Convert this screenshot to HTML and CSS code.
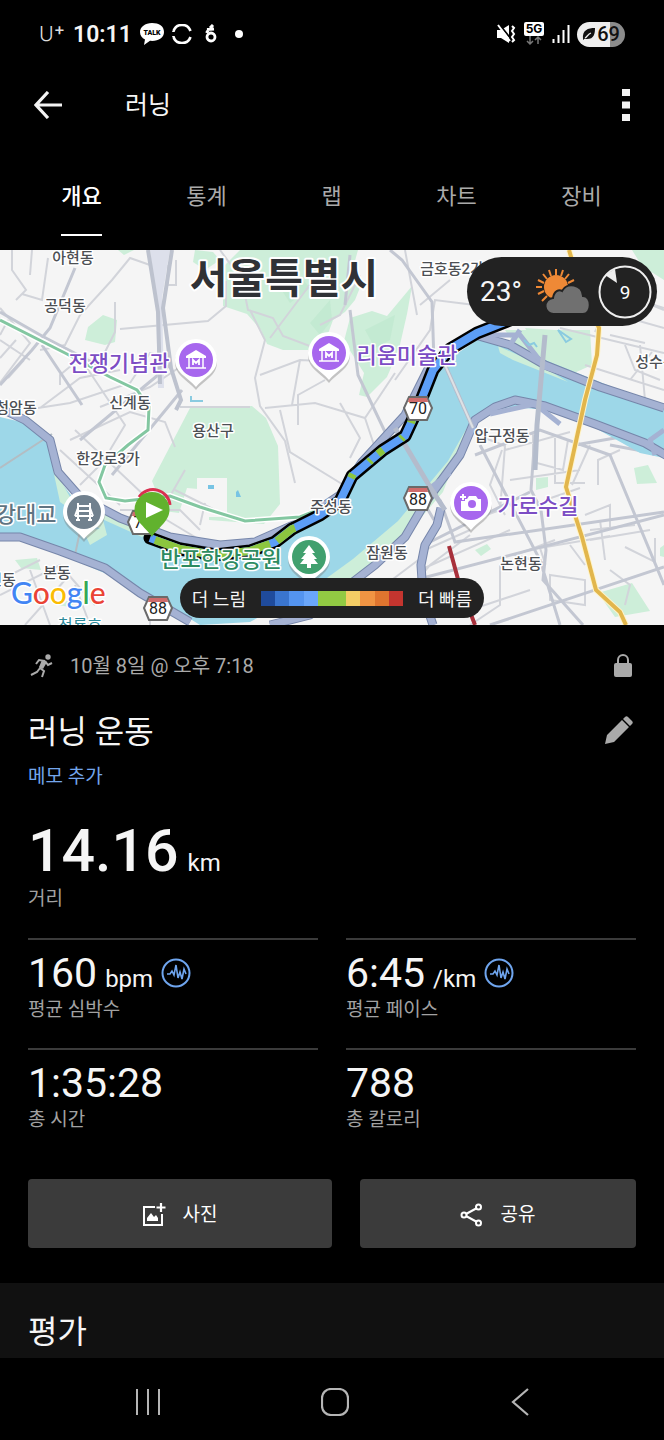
FILE: index.html
```html
<!DOCTYPE html>
<html lang="ko">
<head>
<meta charset="utf-8">
<meta name="viewport" content="width=device-width, initial-scale=1">
<title>러닝</title>
<link rel="stylesheet" href="styles.css">
</head>
<body>
<div class="screen">
  <div class="status">
    <div class="status-group">
      <span class="carrier">U<sup>+</sup></span>
      <span class="clock">10:11</span>
      <svg class="talk" viewBox="0 0 24 22"><path d="M12 0C5 0 0 4 0 9c0 3.500 2 6 5 7.600L4 22l6-4.200C18 18.500 24 15 24 9S19 0 12 0Z" fill="#fff"/><text x="12" y="12" text-anchor="middle" class="talk-text">TALK</text></svg>
      <svg class="ico20" viewBox="0 0 20 20"><path d="M1.500 7A9 9 0 0 1 18.500 7M1.500 13A9 9 0 0 0 18.500 13M1.500 7v1M1.500 12v1" fill="none" stroke="#fff" stroke-width="2.600"/></svg>
      <svg class="ring" viewBox="0 0 12 20"><circle cx="6" cy="13" r="4" fill="none" stroke="#fff" stroke-width="2.800"/><path d="M1.500 9 4 5M2 5.500 9 5M5 4 8 1" stroke="#fff" stroke-width="3"/></svg>
      <span class="dot"></span>
    </div>
    <div class="status-group right">
      <svg class="mute" viewBox="0 0 20 20"><path d="M1 6h4l8-5v18l-8-5H1Z" fill="#fff"/><path d="M3 0 15 15" stroke="#000" stroke-width="2"/><path d="m2 1 12 16M16 2l2 2-2 3 2 3-2 3 2 3-2 2" fill="none" stroke="#fff" stroke-width="2"/></svg>
      <svg class="fiveg" viewBox="0 0 22 24"><rect x="1" width="20" height="14" rx="2" fill="#fff"/><text x="11" y="11" text-anchor="middle" class="fiveg-text">5G</text><path d="M7 14v8M4 19l3 3 3-3M15 22v-7M12 18l3-3 3 3" fill="none" stroke="#777" stroke-width="1.500"/></svg>
      <svg class="signal" viewBox="0 0 18 18"><path d="M1.500 14v4M6.500 10v8M11.500 5v13M16.500 0v18" stroke="#fff" stroke-width="2"/></svg>
      <span class="battery"><svg class="leaf" viewBox="0 0 14 14"><path d="M1 12C0 3 6 1 13 1c0 6-1 11-8 11-2 0-2-1-4 1Z" fill="#111"/><path d="M3 11C5 10 6 7 9 6" stroke="#eee" stroke-width="1.300" fill="none"/></svg>69</span>
    </div>
  </div>

  <header class="appbar">
    <button class="icon-btn" aria-label="뒤로"><svg class="back" viewBox="0 0 28 28"><path d="M14 1 2 14l12 13M2 14h26" fill="none" stroke="#f3f3f3" stroke-width="3.200"/></svg></button>
    <h1>러닝</h1>
    <button class="icon-btn" aria-label="더보기"><svg class="more" viewBox="0 0 8 32"><path d="M0 0h8v7H0ZM0 12.500h8v7H0ZM0 25h8v7H0Z" fill="#f3f3f3"/></svg></button>
  </header>

  <nav class="tabs">
    <a href="#overview" class="active" aria-current="page">개요</a>
    <a href="#stats">통계</a>
    <a href="#laps">랩</a>
    <a href="#charts">차트</a>
    <a href="#gear">장비</a>
  </nav>

  <section class="map">
    <svg class="map-art" viewBox="0 0 664 375" role="img" aria-label="서울 러닝 경로 지도">
      <defs>
        <g id="pin"><path d="M0-21A21 21 0 0 1 21 0C21 14 8 18 0 28-8 18-21 14-21 0A21 21 0 0 1 0-21Z" fill="#777" opacity=".4" transform="translate(0 2)"/><path d="M0-21A21 21 0 0 1 21 0C21 13 8 17 0 27-8 17-21 13-21 0A21 21 0 0 1 0-21Z" fill="#fff"/><circle r="17"/></g>
        <g id="museum"><path d="M-10-4 0-10 10-4v2h-20Z" fill="#fff"/><path d="M-10 8H10M-7-3V8M7-3V8" stroke="#fff" stroke-width="1.500"/><path d="M-3 5V0L0 3 3 0V5" fill="none" stroke="#fff" stroke-width="1.800"/></g>
        <g id="shield"><path d="M-9-11H9L14 0 9 12H-9L-14 0Z" fill="#fff" stroke="#6a6a6a" stroke-width="2"/><path d="M-9-10H9L10-6H-10Z" fill="#cf6c6c"/></g>
      </defs>
      <rect width="664" height="375" fill="#f5f5f5"/>
      <g fill="#cdeed9">
        <path d="M240 0h118l-5 18 10 12-8 20-10 12-12 8-8 22-12 8-30 0-16-6-6-14-14-16-24-8V40l-8-15Z"/>
        <path d="m350 68 22-7 15 5 25-30-5 28-8 35-12 28-20 20-8-2 5-22-20-32Z"/>
        <path d="m190 158 62-2 14 12 12 28 2 58-16 20-55-4v-30l-22-2-8 25-15-2-12-30Z"/>
        <path d="m88 77 15-12 14 5-2 22-10 3-20-5ZM195 0l18 2 7 8-15 10-12-8ZM505 80l85 0 2 35-20 9-50-18ZM118 0h16l-10 5ZM632 0h32v30l-22-14ZM536 228l12-1v10l-12 3ZM634 218l14-3 9 18-20 1ZM660 298v8l4 1v-12ZM598 343l34-10 18 28-35 6ZM475 300l12-6 4 5-10 7ZM15 310l22-2 4 12-20-2ZM60 350l15 2-5 5-12-2Z"/>
      </g>
      <g fill="#bfe8cf" opacity=".7"><path d="m275 30 20-10 15 18-20 15ZM365 80l30-15-5 25-15 8ZM330 50l2 20-12 15-10-12Z"/></g>
      <path d="M197 228h30v39h-30Z" fill="#f5f5f5"/>

      <g fill="none" stroke="#d2d4da" stroke-width="2">
        <path d="M12 0v20l14 20-10 10M32 0l-2 25M48 8 42 50 22 44M0 58l30 35-30 40M0 90l30 20M8 70 0 85M16 90 0 108M24 110 8 128M40 100 65 95 80 65 112 30 130 8 150 15M115 52v30l-10 20M120 79l88-8 18-15v-25M38 158l32-5 60-20 20-30 18 4M85 115l40 60-15 25M40 158l40-30 40-8M100 157l50-20 30-20M70 190l60-28 35 10 10 25M168 15v20h8V10M60 135v-10l12-10"/>
        <path d="M220 0l22 30 6 30 25 8 10 18 32 12M250 60l15 30-10 38 5 28 25 35 10 42M260 125l40-15 40 2M265 158l50-5 50 15 30-45M280 160l10 42 65 40M325 130 298 145v30M300 110l-8 45M250 157H180M270 88l45-60M365 168l15 45M395 130l35-50 5-30 80 10M405 0l12 65M420 55l30-25M360 25 340 65l-20 10M455 90l35 5M340 153l20 35-10 20"/>
        <path d="M560 78l104 25M585 115 664 140M595 82l30-62M625 95l10 25 25 10M600 60l64 18M610 85l35 8M640 95l5 55M520 15l30 60M575 30l89 28M630 130l22-28M615 40l49 20"/>
        <path d="M475 184l30 12-5 65M502 200l-12 35 15 30M533 184v28l30 8 5-30M555 188v45h30M505 200l65-18M510 230l70-10M545 250l35-12M500 260l-22 8M555 290l-40 15 30 8-5-15 70-12M585 265l25-10v25M570 295l15 20M600 270l5 40M590 280l45-5M590 290l60-10M620 200l-22 10v25M655 288v24l-30-15M500 315v40l-30 20M530 340l-60 20M550 325l35 5v25l-35-5ZM610 320l20 15-5 20M470 280l-45 20M590 195l-18 40"/>
        <path d="M420 320l90-40M400 350l30-35 40-30M365 350l60-45M385 330l45 20M435 210l-30 30M440 220l-55 85M150 260l50 30M175 240l50 25M185 220l-20 35M200 275l5-22M0 330l40-20M0 345l60-30 35 40M25 375l40-45M90 375l-15-40M30 320l20 55M150 350v25M60 200l60 55M75 180l90 85M80 235l30-30M120 260l60 0 20 20"/>
      </g>
      <g fill="none" stroke="#c3c7d2" stroke-width="3">
        <path d="M75 18 50 78 32 100 0 135M0 62l42 24 65 34M182 140l-70 85M80 190l90-75M42 95l40 60"/>
        <path d="M390 0l12 10 30 42 2 60M350 60l8 65 38 80 38 65M345 55l5-50"/>
        <path d="M535 185l-4 55 10 20 5 40-3 30 40 45M440 250l15 42 209-30M430 292l100-50M475 205l65-25 70 25 54 130M415 330l249-65M480 195l60 115 20 65M490 375l174-58M610 195l54 10M575 195l80-14"/>
      </g>
      <path d="m150 0h20l-8 48 2 90h-6l-2-86Z" fill="#dde0eb"/>
      <path d="m148 0 10 62 2 72M172 0l-9 58 8 60 10 32-5 10" fill="none" stroke="#bdc2ce" stroke-width="4"/>

      <path d="M0 167 30 174 50 192 55 225 75 250 110 272 150 287 200 300 250 298 290 282 330 258 350 232 385 205 410 170 430 130 455 105 480 88 510 95 550 112 600 132 664 158V208L640 203 590 175 550 160 510 157 485 165 468 180 455 210 430 240 400 272 375 300 345 325 300 345 250 372 200 375 160 350 120 330 70 308 30 292 0 286Z" fill="#9dd7e8"/>
      <path d="M52 215 70 247 103 270 107 285 90 295 83 280 100 279 60 252ZM105 258l45 22-8 7-40-18ZM468 176l-20 35-50 60-45 38-55 40 60-17 55-55 30-35ZM498 96l40 18 30 18-55-22-13-7ZM525 78l30 2 2 25-20-8Z" fill="#cdeed9"/>
      <path d="M0 218 52 184M75 305 84 262" stroke="#b3bdc3" stroke-width="2"/>
      <g fill="none" stroke-linejoin="round">
        <g stroke="#7686aa" stroke-width="9">
          <path d="M0 158 25 170 50 190 58 222 80 247 120 268 170 287 220 295 255 292 300 272 340 245 362 212 405 165 430 115 475 85 510 95 545 115 600 137 664 158"/>
          <path d="M0 287H20L60 301 105 318 140 343 190 372M270 375l40-10 65-50 30-28 20-34 35-48 15-35 20-13 20-7 30 6 50 18 50 19 24 14M441 258l-4 17-12 20-4 20 2 30 10 30"/>
        </g>
        <g stroke="#a5b2d3" stroke-width="7">
          <path d="M0 158 25 170 50 190 58 222 80 247 120 268 170 287 220 295 255 292 300 272 340 245 362 212 405 165 430 115 475 85 510 95 545 115 600 137 664 158"/>
          <path d="M0 287H20L60 301 105 318 140 343 190 372M270 375l40-10 65-50 30-28 20-34 35-48 15-35 20-13 20-7 30 6 50 18 50 19 24 14M441 258l-4 17-12 20-4 20 2 30 10 30"/>
        </g>
        <path d="m475 85 45 0 25 32 25 8M490 164l45-10 25 20M430 238l20-15M520 80l-10 15M655 205l-5-15 14-10" stroke="#a5b2d3" stroke-width="5"/>
        <path d="M395 178 430 237 445 260M545 85l-8 90-2 45" stroke="#b4bccc" stroke-width="5"/>
        <path d="M445 115 473 178" stroke="#b4bccc" stroke-width="4"/>
        <path d="M445 115 473 178" stroke="#dee1e4" stroke-width="2"/>
      </g>
      <path d="M524 90l5 5 5-2 3 4M558 80l8 12 5-3ZM191 146v5h12" fill="none" stroke="#8acbe0" stroke-width="2"/>
      <path d="M208 235h6v4h-6ZM236 247v-5l2-2 3 7Z" fill="#78c4e4"/>
      <g fill="none" stroke="#83c7a1" stroke-width="3">
        <path d="M0 70 65 103 110 127 137 140 149 157 148 180 128 195 105 215 99 232 106 248 125 251 170 246 200 257 245 271 300 267 330 255" stroke="#fff" stroke-width="6"/>
        <path d="M0 70 65 103 110 127 137 140 149 157 148 180 128 195 105 215 99 232 106 248 125 251 170 246 200 257 245 271 300 267 330 255"/>
      </g>
      <path d="M569 0 575 20 599 78 597 105 585 150 566 237 582 287 596 340 620 362 626 375" fill="none" stroke="#fff4ca" stroke-width="6"/>
      <path d="M569 0 575 20 599 78 597 105 585 150 566 237 582 287 596 340 620 362 626 375" fill="none" stroke="#e2b64c" stroke-width="4"/>
      <path d="m449 296 10 37 16 42" fill="none" stroke="#a7303b" stroke-width="4"/>

      <g fill="none" stroke-linejoin="round">
        <path d="M150 288 180 299 215 305 250 301 275 292 292 279 320 265 340 251 352 226 383 200 405 186 418 158 433 120 450 99 477 83 520 66" stroke="#000" stroke-width="13" stroke-linecap="round"/>
        <path d="M150 288 180 299 215 305 250 301 275 292 292 279 320 265 340 251 352 226 383 200 405 186 418 158 433 120 450 99 477 83 520 66" stroke="#5c9ef7" stroke-width="8"/>
        <path d="M155 290 180 299 215 305 250 301 270 294M277 291 292 279 295 278M351 228l2-4M369 212l2-2M378 204l5-4M401 189l2-2M411 173l1-3" stroke="#8cc63f" stroke-width="8"/>
      </g>

      <g class="district">
        <text x="73" y="13">아현동</text><text x="65" y="61">공덕동</text><text x="130" y="158">신계동</text><text x="213" y="186">용산구</text>
        <text x="108" y="214">한강로3가</text><text x="16" y="163">청암동</text><text x="331" y="262">주성동</text><text x="387" y="308">잠원동</text>
        <text x="502" y="191">압구정동</text><text x="521" y="319">논현동</text><text x="452" y="24">금호동2가</text><text x="656" y="117">성수동</text>
        <text x="57" y="328">본동</text><text x="2" y="335">진동</text>
      </g>
      <text class="city" x="284" y="43">서울특별시</text>
      <text class="poi" x="119" y="121">전쟁기념관</text>
      <text class="poi" x="407" y="113">리움미술관</text>
      <text class="poi" x="538" y="264">가로수길</text>
      <text class="poi bridge" x="16" y="272">한강대교</text>
      <text class="poi park" x="221" y="317">반포한강공원</text>
      <text class="station" x="80" y="381">청룡호</text>

      <use href="#pin" x="196" y="110" fill="#a767ee"/><use href="#museum" x="196" y="110"/>
      <use href="#pin" x="329" y="103" fill="#a767ee"/><use href="#museum" x="329" y="103"/>
      <use href="#pin" x="471" y="253" fill="#a767ee"/>
      <path d="M461 249h6l2-3h7l2 3h3v12h-20Z" fill="#fff"/><circle cx="472" cy="254" r="4" fill="#a767ee"/><path d="M463 243v8M459 247h8" stroke="#a767ee" stroke-width="4"/><path d="M463 244v6M460 247h6" stroke="#fff" stroke-width="2"/>
      <use href="#pin" x="84" y="262" fill="#71818e"/>
      <path d="M78 253v17M90 253v17M75 266h18M78 261h12M78 256h12M76 270h4M88 270h4M75 266l3-8M93 266l-3-8" stroke="#fff" stroke-width="2"/>
      <use href="#pin" x="309" y="307" fill="#41a06e"/>
      <path d="m309 295 6 8h-3l5 6h-3l4 5h-7v4h-4v-4h-7l4-5h-3l5-6h-3Z" fill="#fff"/>

      <use href="#shield" x="418" y="158"/><use href="#shield" x="418" y="248"/><use href="#shield" x="158" y="358"/><use href="#shield" x="142" y="272"/>
      <g class="route-no"><text x="418" y="164">70</text><text x="418" y="255">88</text><text x="158" y="364">88</text><text x="138" y="278">7</text></g>
      <path d="M139 247a17 17 0 0 1 31 8" fill="none" stroke="#d9304f" stroke-width="3"/>
      <path d="M152 242a17.500 17.500 0 0 1 17.500 17.500C169.500 272 157 278 152 287c-5-9-17.500-15-17.500-27.500A17.500 17.500 0 0 1 152 242Z" fill="#61b22e"/>
      <path d="m146 252 17 8-17 8Z" fill="#fff"/>
      <text class="google" x="11" y="354"><tspan fill="#4285f4">G</tspan><tspan fill="#ea4335">o</tspan><tspan fill="#fbbc05">o</tspan><tspan fill="#4285f4">g</tspan><tspan fill="#34a853">l</tspan><tspan fill="#ea4335">e</tspan></text>
    </svg>
    <div class="weather">
      <span>23°</span>
      <svg class="sky" viewBox="0 0 56 48"><g stroke="#ef8936" stroke-width="2"><path d="M20 1v6M13 2l2 6M27 2l-2 6M7 6l4 5M33 6l-4 5M2 12l6 3M38 12l-6 3M0 19h6M34 19h6M2 26l6-3M6 33l5-5"/></g><circle cx="20" cy="19" r="12" fill="#ef8936"/><path d="M18 46a8 8 0 0 1-1-16c1-7 6-9 9-7 5-9 20-7 21 5 9 0 9 18 0 18Z" fill="#707070" stroke="#222" stroke-width="2"/></svg>
      <svg class="wind" viewBox="0 0 54 54"><circle cx="27" cy="27" r="25.500" fill="none" stroke="#eee" stroke-width="2"/><path d="m7 10 10-6 2 14Z" fill="#eee"/><text x="27" y="34" text-anchor="middle" class="wind-text">9</text></svg>
    </div>
    <div class="legend"><span>더 느림</span><span class="scale"><i class="c1"></i><i class="c2"></i><i class="c3"></i><i class="c4"></i><i class="c5"></i><i class="c5"></i><i class="c6"></i><i class="c7"></i><i class="c8"></i><i class="c9"></i></span><span>더 빠름</span></div>
  </section>

  <main class="content">
    <div class="meta">
      <svg class="runner" viewBox="0 0 24 24"><circle cx="18" cy="3" r="2.700" fill="#aaa"/><path d="m15 7-5 7 4 3-2 6M10 14l-3 4-6 3M15 7l-6-1-3 4M15 7l3 4 4-2" fill="none" stroke="#aaa" stroke-width="2"/><path d="m12 6 5 2-4 7-4-2Z" fill="#aaa"/></svg>
      <span>10월 8일 @ 오후 7:18</span>
      <svg class="lock" viewBox="0 0 18 24"><path d="M4 10V6a5 5 0 0 1 10 0v4" fill="none" stroke="#aaa" stroke-width="2"/><rect y="9" width="18" height="14" rx="2" fill="#aaa"/></svg>
    </div>
    <div class="title-row">
      <h2>러닝 운동</h2>
      <button class="icon-btn" aria-label="편집"><svg class="pencil" viewBox="0 0 28 28"><path d="m0 28 2-9L17 4l7 7L9 26ZM18 3l2-2c1-1 2-1 3 0l4 4c1 1 1 2 0 3l-2 2Z" fill="#aaa"/></svg></button>
    </div>
    <a class="memo" href="#memo">메모 추가</a>
    <div class="distance"><p class="big">14.16 <small>km</small></p><p class="label">거리</p></div>
    <div class="stats">
      <div class="stat"><p class="value">160 <small>bpm</small> <svg class="pulse" viewBox="0 0 30 30"><circle cx="15" cy="15" r="13.500" fill="none" stroke="#6fa5ee" stroke-width="2"/><path d="M6 16h3l2-3 2 4 2-10 2 13 2-6 2 7 2-10 2 5" fill="none" stroke="#6fa5ee" stroke-width="1.600"/></svg></p><p class="label">평균 심박수</p></div>
      <div class="stat"><p class="value">6:45 <small>/km</small> <svg class="pulse" viewBox="0 0 30 30"><circle cx="15" cy="15" r="13.500" fill="none" stroke="#6fa5ee" stroke-width="2"/><path d="M6 16h3l2-3 2 4 2-10 2 13 2-6 2 7 2-10 2 5" fill="none" stroke="#6fa5ee" stroke-width="1.600"/></svg></p><p class="label">평균 페이스</p></div>
      <div class="stat"><p class="value">1:35:28</p><p class="label">총 시간</p></div>
      <div class="stat"><p class="value">788</p><p class="label">총 칼로리</p></div>
    </div>
    <div class="actions">
      <button class="action photo"><svg viewBox="0 0 24 24"><path d="M13 4H2v18h18V11" fill="none" stroke="#fff" stroke-width="2"/><path d="M19 0v9M14.500 4.500h9" stroke="#fff" stroke-width="2.200"/><path d="M5 18v-3l4-5 3 4 2-2 2 3v3Z" fill="#fff"/></svg>사진</button>
      <button class="action share"><svg viewBox="0 0 24 24"><path d="m6 11 11-6M6 13l11 6" stroke="#fff" stroke-width="2"/><g fill="none" stroke="#fff" stroke-width="2"><circle cx="4" cy="12" r="2.500"/><circle cx="18.500" cy="4" r="2.500"/><circle cx="18.500" cy="20" r="2.500"/></g></svg>공유</button>
    </div>
  </main>
  <section class="rating"><h2>평가</h2></section>
  <nav class="sysnav">
    <button class="icon-btn" aria-label="최근 앱"><svg viewBox="0 0 28 28"><path d="M3 1v26M14 1v26M25 1v26" stroke="#b5b5b5" stroke-width="2"/></svg></button>
    <button class="icon-btn" aria-label="홈"><svg viewBox="0 0 28 28"><rect x="1" y="1" width="26" height="26" rx="9" fill="none" stroke="#b5b5b5" stroke-width="2.200"/></svg></button>
    <button class="icon-btn" aria-label="뒤로 가기"><svg viewBox="0 0 28 28"><path d="M21 1 6 14l15 13" fill="none" stroke="#b5b5b5" stroke-width="2.200"/></svg></button>
  </nav>
</div>
</body>
</html>
```

FILE: styles.css
```css
* { box-sizing: border-box; }
body { margin: 0; background: #000; color: #f5f5f5; font-family: Roboto, "Noto Sans CJK KR", sans-serif; }
h1, h2, p { margin: 0; font-weight: 400; }
a { text-decoration: none; color: inherit; }
svg { display: block; flex: none; }
.screen { display: flex; flex-direction: column; min-height: 100vh; }
.icon-btn { border: 0; padding: 0; background: none; color: inherit; }

.status { display: flex; justify-content: space-between; align-items: center; height: 68px; padding: 0 39px; }
.status-group { display: flex; align-items: center; gap: 8px; }
.carrier { color: #ddd; font: 300 20px/24px Inter, sans-serif; }
.carrier sup { font-size: 17px; font-weight: 500; line-height: 1px; vertical-align: 6px; }
.clock { font-size: 23px; font-weight: 600; }
.talk { width: 24px; height: 22px; }
.talk-text { font: 900 7px Roboto, sans-serif; fill: #000; }
.ico20 { width: 20px; height: 20px; }
.ring { width: 12px; height: 20px; margin-left: 5px; }
.dot { width: 8px; height: 8px; margin-left: 10px; border-radius: 50%; background: #fff; }
.right { gap: 7px; }
.mute { width: 20px; height: 20px; }
.fiveg { width: 22px; height: 24px; }
.fiveg-text { font: 700 12px Inter, sans-serif; fill: #000; }
.signal { width: 18px; height: 18px; }
.battery { display: flex; align-items: center; justify-content: center; gap: 1px; width: 48px; height: 25px; border-radius: 13px; background: linear-gradient(90deg, #eee 68%, #8b8b8b 68%); color: #111; font-size: 20px; font-weight: 500; }
.leaf { width: 14px; height: 14px; }

.appbar { display: flex; align-items: center; height: 72px; padding: 2px 34px 0; }
.back { width: 28px; height: 28px; }
.appbar h1 { flex: 1; margin-left: 63px; padding-top: 2px; font-size: 25px; line-height: 36px; }
.more { width: 8px; height: 32px; }

.tabs { display: grid; grid-template-columns: repeat(5, 1fr); justify-items: center; height: 110px; padding: 32px 20px 0 19px; }
.tabs a { height: 64px; font-size: 22px; line-height: 50px; color: #aaa; }
.tabs .active { color: #fff; font-weight: 500; border-bottom: 2px solid #fff; }

.map { position: relative; overflow: hidden; }
.map-art { width: 100%; height: auto; font-family: Roboto, "Noto Sans CJK KR", sans-serif; text-anchor: middle; }
.map-art text { paint-order: stroke; stroke: #fff; stroke-width: 3px; stroke-linejoin: round; }
.district { font-size: 15px; font-weight: 500; fill: #4c4f54; }
.map-art .city { font-size: 41px; font-weight: 700; fill: #303236; stroke-width: 4px; }
.poi { font-size: 22px; font-weight: 500; fill: #7c4dc4; }
.map-art .bridge { fill: #5f7482; }
.map-art .park { fill: #2d8b61; }
.station { font-size: 16px; fill: #2d8a9a; }
.route-no { font-size: 16px; fill: #222; }
.map-art .route-no text { stroke: none; }
.map-art .google { font: 500 30px Lato, sans-serif; text-anchor: start; }
.weather { position: absolute; top: 7px; right: 7px; display: flex; align-items: center; gap: 14px; width: 190px; height: 69px; padding: 0 4px 0 13px; border-radius: 35px; background: #222; font-size: 28px; }
.sky { width: 56px; height: 48px; }
.wind { width: 54px; height: 54px; margin-left: -8px; }
.wind-text { font-size: 19px; fill: #fff; }
.legend { position: absolute; bottom: 7px; left: 50%; transform: translateX(-50%); display: flex; align-items: center; justify-content: center; gap: 15px; width: 304px; height: 40px; border-radius: 20px; background: #222; font-size: 18px; white-space: nowrap; }
.scale { display: flex; width: 142px; height: 15px; }
.scale i { flex: 1; }
.c1 { background: #1f4b9c; } .c2 { background: #3a75cf; } .c3 { background: #5494f0; } .c4 { background: #6aa6fa; } .c5 { background: #92ca43; }
.c6 { background: #f4cd65; } .c7 { background: #f09443; } .c8 { background: #df752f; } .c9 { background: #c4352f; }

.content { padding: 27px 28px 35px; }
.meta { display: flex; align-items: center; height: 28px; padding: 0 4px 0 2px; gap: 16px; color: #aaa; font-size: 20px; line-height: 28px; }
.runner { width: 24px; height: 24px; }
.lock { width: 18px; height: 24px; margin-left: auto; }
.title-row { display: flex; align-items: center; justify-content: space-between; margin-top: 24px; padding-right: 3px; }
.title-row h2 { padding-top: 4px; font-size: 32px; line-height: 48px; }
.pencil { width: 28px; height: 28px; }
.memo { display: block; margin-top: 7px; font-size: 19px; line-height: 28px; color: #73a6ec; }
.distance { margin-top: 24px; height: 123px; }
.big { display: flex; align-items: baseline; gap: 9px; font-size: 59px; font-weight: 500; line-height: 72px; white-space: nowrap; }
.big small { font-size: 24px; font-weight: 400; line-height: 28px; }
.label { font-size: 19px; line-height: 24px; color: #a2a2a2; }
.stats { display: grid; grid-template-columns: 1fr 1fr; column-gap: 28px; }
.stat { height: 110px; padding-top: 8px; border-top: 2px solid #3b3b3b; }
.value { display: flex; align-items: baseline; gap: 8px; font-size: 41px; line-height: 50px; white-space: nowrap; }
.value small { font-size: 24px; line-height: 28px; }
.pulse { align-self: center; width: 30px; height: 30px; }
.actions { display: flex; gap: 28px; margin-top: 21px; }
.action { display: flex; flex: 10 1 0; align-items: center; justify-content: center; gap: 16px; height: 69px; padding: 2px 0 0; border: 0; border-radius: 4px; background: #3b3b3b; color: #fff; font: 400 19px/28px Roboto, "Noto Sans CJK KR", sans-serif; }
.photo { flex-grow: 11; }
.action svg { width: 24px; height: 24px; }
.rating { flex: 1; padding: 25px 28px 2px; background: #111; }
.rating h2 { font-size: 32px; line-height: 48px; }
.sysnav { display: flex; align-items: center; justify-content: space-between; height: 83px; padding: 4px 129px 0 134px; }
.sysnav svg { width: 28px; height: 28px; }
```
